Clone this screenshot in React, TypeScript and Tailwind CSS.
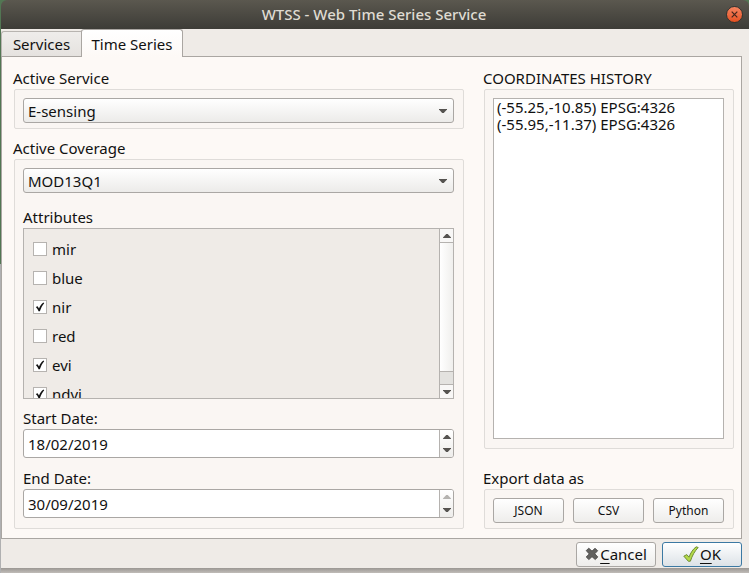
import { useState } from "react";
import type { ReactNode } from "react";

const attributes = [
  { name: "mir", on: false },
  { name: "blue", on: false },
  { name: "nir", on: true },
  { name: "red", on: false },
  { name: "evi", on: true },
  { name: "ndvi", on: true },
];

const history = ["(-55.25,-10.85) EPSG:4326", "(-55.95,-11.37) EPSG:4326"];

function Arrow({ up = false, faded = false }: { up?: boolean; faded?: boolean }) {
  return (
    <svg
      viewBox="0 0 8 4"
      className={`h-1 w-2 ${faded ? "fill-[#b5b3b0]" : "fill-[#555350]"}`}
      aria-hidden="true"
    >
      <path d={up ? "M0 4V3.4L3.2 0h1.6L8 3.4V4z" : "M0 0v.6L3.2 4h1.6L8 .6V0z"} />
    </svg>
  );
}

function Combo({ id, value }: { id: string; value: string }) {
  return (
    <div className="relative">
      <select
        id={id}
        className="block h-[25px] w-full appearance-none rounded-[3px] border border-[#aaa7a4] bg-linear-to-b from-white to-[#ecebe9] pr-6 pl-1 leading-5 outline-none"
      >
        <option>{value}</option>
      </select>
      <span className="pointer-events-none absolute inset-y-0 right-[7px] flex items-center">
        <Arrow />
      </span>
    </div>
  );
}

function GroupLabel({ htmlFor, children }: { htmlFor?: string; children: ReactNode }) {
  const style = "block h-[21px] leading-5";
  return htmlFor ? (
    <label htmlFor={htmlFor} className={style}>
      {children}
    </label>
  ) : (
    <h2 className={style}>{children}</h2>
  );
}

function DateBox({ id, value, atMax = false }: { id: string; value: string; atMax?: boolean }) {
  return (
    <div className="flex h-[29px] overflow-hidden rounded-[3px] border border-[#aaa7a4] bg-white">
      <input
        id={id}
        type="text"
        defaultValue={value}
        className="min-w-0 flex-1 bg-transparent px-1 outline-none"
      />
      <div className="flex w-[14px] flex-col border-l border-[#b5b2af] bg-linear-to-b from-white to-[#eeedeb]">
        <button
          type="button"
          aria-label="Later date"
          disabled={atMax}
          className="flex flex-1 items-center justify-center"
        >
          <Arrow up faded={atMax} />
        </button>
        <button type="button" aria-label="Earlier date" className="flex flex-1 items-center justify-center">
          <Arrow />
        </button>
      </div>
    </div>
  );
}

function Attribute({ name, on }: { name: string; on: boolean }) {
  const [checked, setChecked] = useState(on);
  return (
    <label className="flex h-7 shrink-0 items-center gap-[5px]">
      <span className="relative size-[14px]">
        <input
          type="checkbox"
          checked={checked}
          onChange={() => setChecked(!checked)}
          className="block size-[14px] appearance-none border border-[#b6b3b0] bg-white"
        />
        {checked && (
          <svg viewBox="0 0 14 14" className="pointer-events-none absolute inset-0 size-[14px]" aria-hidden="true">
            <path d="M2.8 7 4.6 6.2 6 8.4C7 6.2 8.2 4.2 10.4 2.6L11.2 3.3C9.3 5.6 8 8 6.9 11.2H5.5C5 9.6 4 8.2 2.8 7Z" fill="#111" />
          </svg>
        )}
      </span>
      {name}
    </label>
  );
}

function ExportButton({ children }: { children: ReactNode }) {
  return (
    <button
      type="button"
      className="h-[25px] flex-1 rounded-[3px] border border-[#aaa7a4] bg-linear-to-b from-white to-[#eeedeb] text-xs"
    >
      {children}
    </button>
  );
}

const group = "rounded-[2px] border border-[#dfdcd9] bg-[#faf6f3] pt-2 pr-[9px] pl-2";

export default function App() {
  return (
    <div className="flex min-h-screen flex-col bg-linear-to-b from-[#527653] from-46% to-[#b0b0b1] to-46% pl-px font-['Noto_Sans',sans-serif] text-[15px] leading-5 text-[#111]">
      <header className="flex h-[29px] items-center rounded-t-md bg-linear-to-b from-[#5b584f] to-[#3d3c37] pr-[6px] pl-[21px] text-[#dfdbd2]">
        <h1 className="flex-1 pb-px text-center font-medium">WTSS - Web Time Series Service</h1>
        <button
          type="button"
          aria-label="Close"
          className="flex size-[17px] items-center justify-center rounded-full border border-[#35332f] bg-linear-to-b from-[#f5845f] to-[#e5501f]"
        >
          <svg viewBox="0 0 7 7" className="size-[7px]" aria-hidden="true">
            <path d="M.7.7l5.6 5.6M6.3.7.7 6.3" stroke="#40251c" strokeWidth="1.2" />
          </svg>
        </button>
      </header>

      <main className="flex flex-1 flex-col bg-[#efebe7] pr-[7px]">
        <div role="tablist" className="flex h-7 items-end">
          <button
            type="button"
            role="tab"
            aria-selected="false"
            className="mb-px h-[25px] w-20 rounded-tl-[3px] border-t border-l border-[#b8b4b0] bg-linear-to-b from-[#efedeb] to-[#e5e2df]"
          >
            Services
          </button>
          <button
            type="button"
            role="tab"
            aria-selected="true"
            className="z-10 h-7 w-[102px] rounded-t-[3px] border border-b-0 border-[#aaa6a2] bg-linear-to-b from-white to-[#fdf9f6]"
          >
            Time Series
          </button>
        </div>

        <div className="-mt-px flex flex-1 gap-5 border border-[#aaa6a2] bg-[#fdf9f6] pt-[11px] pr-[7px] pb-[9px] pl-3">
          <section className="flex flex-1 flex-col">
            <div className="-ml-px">
              <GroupLabel htmlFor="service">Active Service</GroupLabel>
            </div>
            <div className={`${group} pb-[5px]`}>
              <Combo id="service" value="E-sensing" />
            </div>

            <div className="mt-[9px] -ml-px">
              <GroupLabel htmlFor="coverage">Active Coverage</GroupLabel>
            </div>
            <div className={`${group} flex flex-1 flex-col pb-[10px]`}>
              <Combo id="coverage" value="MOD13Q1" />

              <div className="mt-[14px]">
                <GroupLabel>Attributes</GroupLabel>
              </div>
              <div className="flex h-[171px] border border-[#b5b2af] bg-[#efebe7]">
                <div className="flex flex-1 flex-col gap-px overflow-hidden pt-[6px] pl-[9px]">
                  {attributes.map((a) => (
                    <Attribute key={a.name} {...a} />
                  ))}
                </div>
                <div className="flex w-[14px] flex-col border-l border-[#b5b2af] bg-[#e3e2df]">
                  <button
                    type="button"
                    aria-label="Scroll up"
                    className="flex h-[14px] items-center justify-center border-b border-[#b5b2af] bg-[#f8f7f6]"
                  >
                    <Arrow up />
                  </button>
                  <div className="h-[129px] border-b border-[#b5b2af] bg-linear-to-r from-white to-[#f0efed]" />
                  <div className="flex-1" />
                  <button
                    type="button"
                    aria-label="Scroll down"
                    className="flex h-[14px] items-center justify-center border-t border-[#b5b2af] bg-[#f8f7f6]"
                  >
                    <Arrow />
                  </button>
                </div>
              </div>

              <div className="mt-[9px]">
                <GroupLabel htmlFor="start">Start Date:</GroupLabel>
              </div>
              <DateBox id="start" value="18/02/2019" />

              <div className="mt-[10px]">
                <GroupLabel htmlFor="end">End Date:</GroupLabel>
              </div>
              <DateBox id="end" value="30/09/2019" atMax />
            </div>
          </section>

          <section className="flex w-[250px] flex-col">
            <div className="-ml-px">
              <GroupLabel>COORDINATES HISTORY</GroupLabel>
            </div>
            <div className={`${group} flex flex-1 flex-col pb-[9px]`}>
              <ul className="flex-1 border border-[#b5b2af] bg-white px-[3px]">
                {history.map((h) => (
                  <li key={h} className="leading-[17px]">
                    {h}
                  </li>
                ))}
              </ul>
            </div>

            <div className="mt-[19px] -ml-px">
              <GroupLabel>Export data as</GroupLabel>
            </div>
            <div className={`${group} flex gap-[9px] pb-[5px]`}>
              <ExportButton>JSON</ExportButton>
              <ExportButton>CSV</ExportButton>
              <ExportButton>Python</ExportButton>
            </div>
          </section>
        </div>

        <footer className="flex h-[29px] items-center justify-end gap-[6px] pt-px">
          <button
            type="button"
            className="flex h-[25px] w-20 items-center justify-center gap-px rounded-[3px] border border-[#aaa7a4] bg-linear-to-b from-white to-[#eeedeb]"
          >
            <svg viewBox="0 0 14 14" className="size-[14px] shrink-0" aria-hidden="true">
              <path
                d="M1.2 3.6 3.8 1.2 7 4.1 10 1.3 12.7 3.7 9.8 6.8 12.8 9.9 10.3 12.6 7 9.7 3.9 12.6 1.2 10 4.2 6.9Z"
                fill="#62615f"
                stroke="#454442"
                strokeWidth=".8"
                strokeLinejoin="round"
              />
            </svg>
            <span>
              <span className="underline decoration-1 underline-offset-3">C</span>ancel
            </span>
          </button>
          <button
            type="button"
            className="flex h-[25px] w-20 items-center justify-center gap-px rounded-[3px] border border-[#3c79a3] bg-linear-to-b from-white to-[#dce2e7]"
          >
            <svg viewBox="0 0 16 16" className="size-4 shrink-0" aria-hidden="true">
              <path
                d="M.8 10.2 3.8 8.6 6 11.2C7.6 6.8 10 3 13.2.8L15.2 1.5C11.8 5 9.2 9.6 7.4 15.2L5.4 15.3Z"
                fill="#b4d94a"
                stroke="#64832a"
                strokeWidth=".9"
                strokeLinejoin="round"
              />
            </svg>
            <span>
              <span className="underline decoration-1 underline-offset-3">O</span>K
            </span>
          </button>
        </footer>
      </main>
      <div className="h-[5px] bg-linear-to-b from-[#9b9793] to-[#c0bcb8]" />
    </div>
  );
}
